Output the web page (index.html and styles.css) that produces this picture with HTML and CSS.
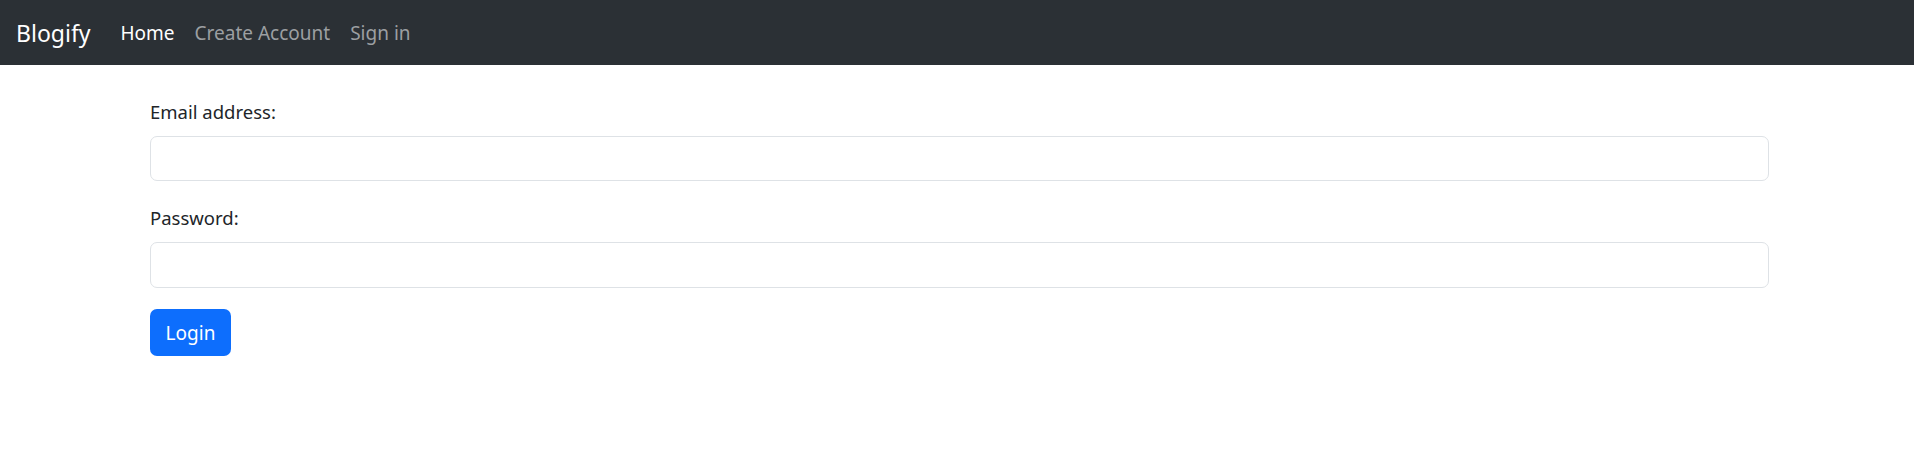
FILE: index.html
```html
<!DOCTYPE html>
<html lang="en">
<head>
<meta charset="utf-8">
<title>Blogify</title>
<link rel="stylesheet" href="styles.css">
</head>
<body>
<nav class="navbar">
  <a class="brand" href="#">Blogify</a>
  <ul class="nav">
    <li><a class="nav-link active" href="#">Home</a></li>
    <li><a class="nav-link" href="#">Create Account</a></li>
    <li><a class="nav-link" href="#">Sign in</a></li>
  </ul>
</nav>
<main class="container">
  <form class="form">
    <div class="field">
      <label class="label" for="email">Email address:</label>
      <input class="input" id="email" type="email">
    </div>
    <div class="field">
      <label class="label" for="password">Password:</label>
      <input class="input input-tall" id="password" type="password">
    </div>
    <button class="btn" type="button">Login</button>
  </form>
</main>
</body>
</html>
```

FILE: styles.css
```css
* { box-sizing: border-box; }
html, body { margin: 0; padding: 0; }
body {
  font-family: "Noto Sans", "Open Sans", sans-serif;
  color: #212529;
  background: #fff;
}
.navbar {
  height: 65px;
  background: #2b3035;
  display: flex;
  align-items: center;
  padding: 0 16px;
}
.brand {
  font-size: 23px;
  color: #fff;
  text-decoration: none;
  margin-right: 20px;
  line-height: 30px;
}
.nav {
  list-style: none;
  margin: 0;
  padding: 0;
  display: flex;
}
.nav-link {
  display: block;
  padding: 0 10px;
  font-size: 19px;
  line-height: 28px;
  color: #9c9fa2;
  text-decoration: none;
}
.nav-link.active { color: #fff; }
.container {
  padding: 32px 145px 0 150px;
}
.form { display: flex; flex-direction: column; align-items: stretch; }
.field { display: flex; flex-direction: column; margin-bottom: 22px; }
.field:nth-child(2) { margin-bottom: 21px; }
.label {
  font-size: 18.5px;
  line-height: 29px;
  margin-bottom: 10px;
  color: #212529;
}
.input {
  height: 45px;
  border: 1px solid #dee2e6;
  border-radius: 7px;
  background: #fff;
  font: inherit;
  padding: 0 14px;
}
.input-tall { height: 46px; }
.btn {
  align-self: flex-start;
  width: 81px;
  height: 47px;
  border: 0;
  border-radius: 7px;
  background: #0d6efd;
  color: #fff;
  font-family: inherit;
  font-size: 19px;
  padding: 0;
}
```
